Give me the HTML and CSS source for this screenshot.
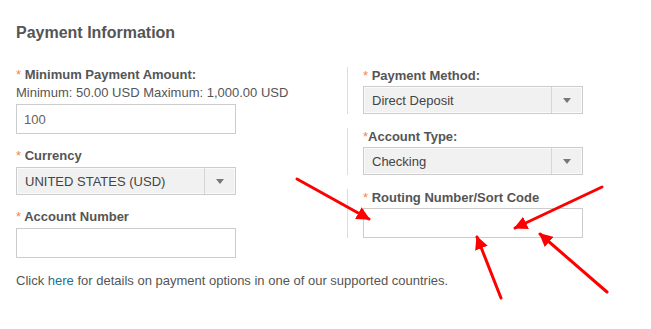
FILE: index.html
```html
<!DOCTYPE html>
<html>
<head>
<meta charset="utf-8">
<link rel="stylesheet" href="styles.css">
</head>
<body>
<div class="page">
  <h2 class="title">Payment Information</h2>
  <div class="cols">
    <div class="left">
      <div class="field">
        <div class="label"><span class="req">*</span> Minimum Payment Amount:</div>
        <div class="hint">Minimum: 50.00 USD Maximum: 1,000.00 USD</div>
        <div class="input"><span class="val">100</span></div>
      </div>
      <div class="field gap">
        <div class="label"><span class="req">*</span> Currency</div>
        <div class="select"><span class="sel-text">UNITED STATES (USD)</span><span class="sel-btn"><span class="tri"></span></span></div>
      </div>
      <div class="field gap">
        <div class="label"><span class="req">*</span> Account Number</div>
        <div class="input"></div>
      </div>
      <p class="note">Click <a class="link" href="#">here</a> for details on payment options in one of our supported countries.</p>
    </div>
    <div class="right">
      <div class="block">
        <div class="label"><span class="req">*</span> Payment Method:</div>
        <div class="select"><span class="sel-text">Direct Deposit</span><span class="sel-btn"><span class="tri"></span></span></div>
      </div>
      <div class="block">
        <div class="label"><span class="req">*</span>Account Type:</div>
        <div class="select"><span class="sel-text">Checking</span><span class="sel-btn"><span class="tri"></span></span></div>
      </div>
      <div class="block">
        <div class="label"><span class="req">*</span> Routing Number/Sort Code</div>
        <div class="input"></div>
      </div>
    </div>
  </div>
</div>
<svg class="arrows" width="651" height="329" viewBox="0 0 651 329">
  <defs>
    <marker id="ah" viewBox="0 0 10 10" refX="9" refY="5" markerWidth="4.5" markerHeight="4.5" orient="auto" markerUnits="strokeWidth">
      <path d="M0 0 L10 5 L0 10 Z" fill="#f00"/>
    </marker>
  </defs>
  <g stroke="#f00" stroke-width="3" stroke-linecap="round" fill="none" marker-end="url(#ah)">
    <line x1="297" y1="179" x2="369" y2="219"/>
    <line x1="602" y1="187" x2="515" y2="228"/>
    <line x1="501" y1="298" x2="477" y2="237"/>
    <line x1="607" y1="292" x2="540" y2="234"/>
  </g>
</svg>
</body>
</html>
```
FILE: styles.css
```css
html, body {
  margin: 0;
  padding: 0;
  background: #fff;
}
body {
  font-family: "Liberation Sans", Arial, sans-serif;
  font-size: 13px;
  color: #555;
  position: relative;
  width: 651px;
  height: 329px;
  overflow: hidden;
}
.page {
  padding: 23px 0 0 16px;
}
.title {
  margin: 0;
  font-size: 16px;
  line-height: 20px;
  font-weight: bold;
  color: #555;
}
.cols {
  display: flex;
  margin-top: 23px;
}
.left {
  width: 331px;
}
.right {
  padding-top: 1px;
}
.label {
  font-weight: bold;
  line-height: 18px;
  color: #555;
  white-space: nowrap;
}
.req {
  color: #f4874b;
  font-weight: normal;
}
.hint {
  line-height: 18px;
  white-space: nowrap;
}
.field .input,
.field .select {
  margin-top: 2px;
}
.field.gap {
  margin-top: 13px;
}
.input {
  box-sizing: border-box;
  width: 220px;
  height: 30px;
  border: 1px solid #ccc;
  background: #fff;
  padding: 0 7px;
  display: flex;
  align-items: center;
}
.val {
  color: #6a5f58;
}
.select {
  box-sizing: border-box;
  width: 220px;
  height: 28px;
  border: 1px solid #ccc;
  background: #f1f1f1;
  box-shadow: inset 0 0 0 1px #fafafa;
  display: flex;
  color: #444;
}
.sel-text {
  flex: 1;
  display: flex;
  align-items: center;
  padding-left: 8px;
  white-space: nowrap;
}
.sel-btn {
  width: 30px;
  border-left: 1px solid #d6d6d6;
  display: flex;
  align-items: center;
  justify-content: center;
}
.tri {
  width: 0;
  height: 0;
  border-left: 4.5px solid transparent;
  border-right: 4.5px solid transparent;
  border-top: 5px solid #777;
}
.note {
  margin: 14px 0 0;
  line-height: 18px;
  white-space: nowrap;
}
.link {
  color: #1f6e8c;
  text-decoration: none;
}
.block {
  border-left: 1px solid #ddd;
  padding-left: 15px;
}
.block + .block {
  margin-top: 14px;
}
.block .select,
.block .input {
  margin-top: 1px;
}
.arrows {
  position: absolute;
  left: 0;
  top: 0;
  pointer-events: none;
}
```
